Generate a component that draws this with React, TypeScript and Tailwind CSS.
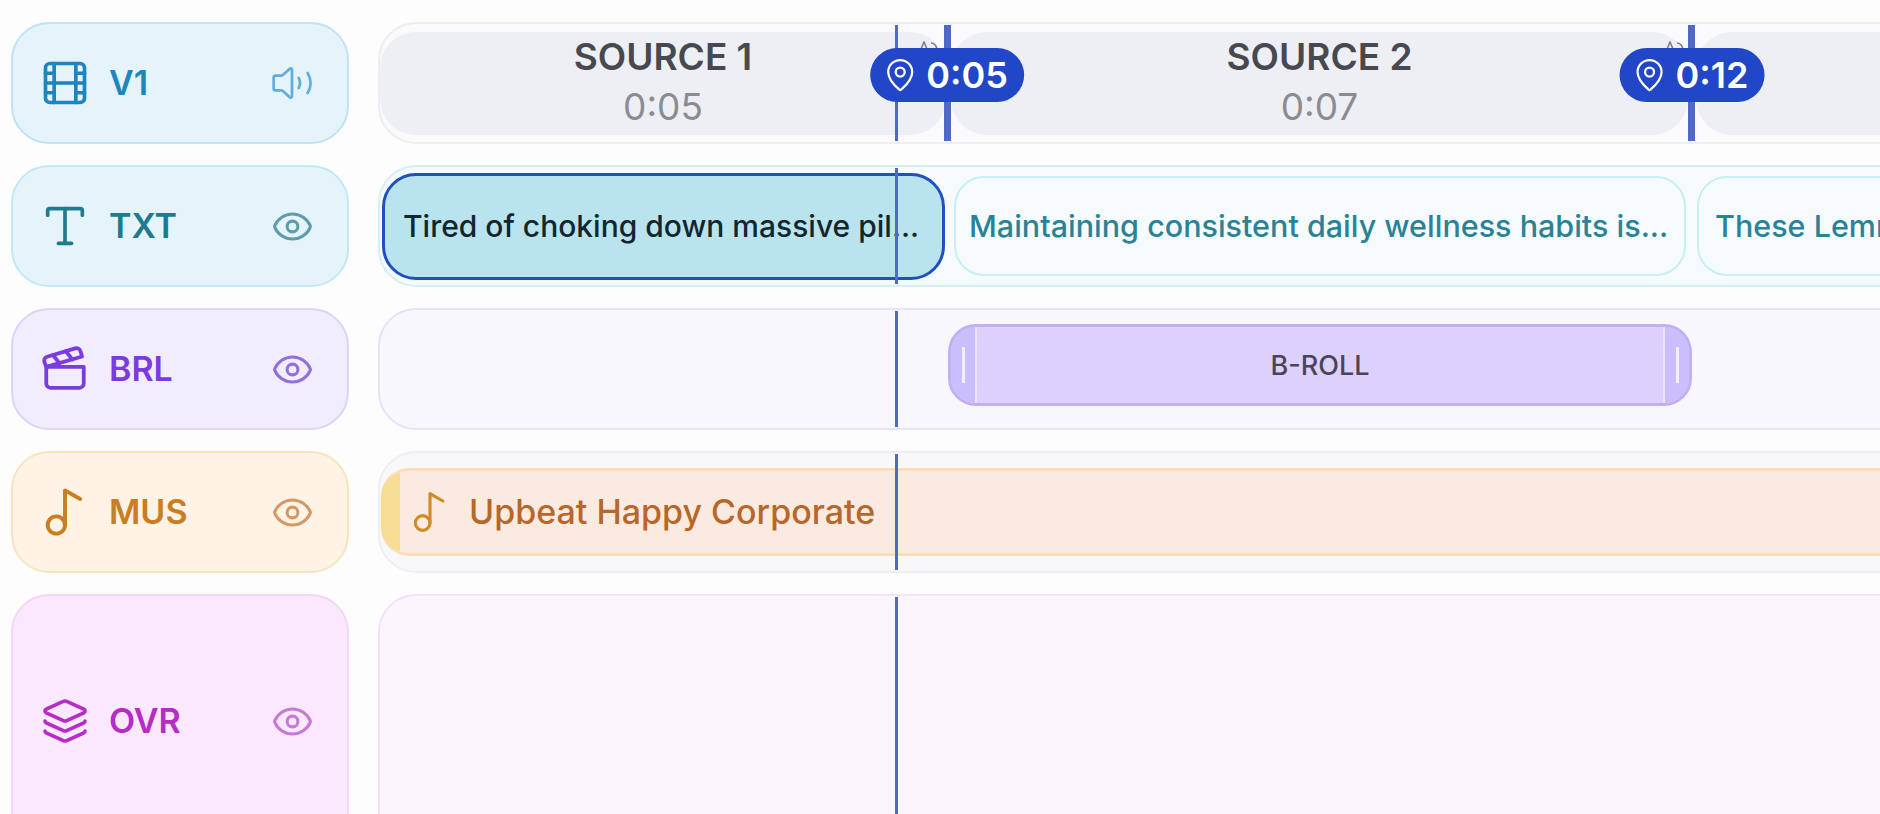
import React from "react";
import { Film, Type, Clapperboard, Music2, Layers, Eye, MapPin } from "lucide-react";

function Playhead() {
  return <div className="absolute inset-y-[1px] left-[515px] w-[3px] bg-[#5068c6] z-10" />;
}

function Speaker() {
  return (
    <svg width="44" height="44" viewBox="0 0 24 24" fill="none" stroke="currentColor" strokeWidth="1.5" strokeLinecap="round" strokeLinejoin="round">
      <path d="M12 4.7a.7.7 0 0 0-1.2-.5L7 7.6A1.4 1.4 0 0 1 6 8H3a1 1 0 0 0-1 1v6a1 1 0 0 0 1 1h3a1.4 1.4 0 0 1 1 .4l3.8 3.4a.7.7 0 0 0 1.2-.5z" />
      <path d="M15.7 9.3a6 6 0 0 1 0 5.4" />
      <path d="M20.5 6.5a10 10 0 0 1 0 11" />
    </svg>
  );
}

function Label({ icon, name, side, className, nameColor, sideColor, tall }: {
  icon: React.ReactNode; name: string; side: React.ReactNode; className: string; nameColor: string; sideColor: string; tall?: boolean;
}) {
  return (
    <div className={`w-[338px] shrink-0 rounded-[38px] border-2 flex items-center pl-[26px] pr-[33px] ${className} ${tall ? "h-[300px] pb-[46px]" : "h-[122px]"}`}>
      <div className={`w-[52px] h-[52px] shrink-0 flex items-center justify-center ${nameColor}`}>{icon}</div>
      <span className={`ml-[18px] text-[34px] font-semibold leading-none ${nameColor}`}>{name}</span>
      <div className={`ml-auto ${sideColor}`}>{side}</div>
    </div>
  );
}

function Pill({ time, pos }: { time: string; pos: string }) {
  return (
    <div className={`absolute top-[24px] h-[54px] -translate-x-1/2 rounded-full bg-[#2146c7] text-white flex items-center pl-[12px] pr-[16px] gap-[8px] z-20 ${pos}`}>
      <MapPin size={36} strokeWidth={1.5} />
      <span className="text-[36px] font-semibold leading-none">{time}</span>
    </div>
  );
}

function Tick({ pos }: { pos: string }) {
  return (
    <svg width="18" height="8" viewBox="0 0 18 8" className={`absolute top-[17px] z-10 text-[#77798a] ${pos}`} fill="none" stroke="currentColor" strokeWidth="1.5">
      <path d="M1 8 L4 1 L7 8" />
      <path d="M11 2 C14 2 16 4 17 8" />
    </svg>
  );
}

function SourceClip({ className, title, time }: { className: string; title?: string; time?: string }) {
  return (
    <div className={`shrink-0 h-[103px] rounded-[36px] bg-[#eeeff5] flex flex-col items-center justify-center pb-[3px] ${className}`}>
      {title && <div className="text-[37px] font-semibold leading-[50px] text-[#47494f]">{title}</div>}
      {time && <div className="text-[37px] font-normal leading-[50px] text-[#8a8c92]">{time}</div>}
    </div>
  );
}

export default function App() {
  return (
    <div className="w-[1880px] h-[814px] overflow-hidden bg-[#fdfdfe] pt-[22px] pl-[11px] flex flex-col gap-[21px] font-['Inter',sans-serif]">
      {/* V1 */}
      <div className="flex gap-[29px] shrink-0">
        <Label
          icon={<Film size={52} strokeWidth={1.7} />}
          name="V1"
          className="bg-[#e5f3fb] border-[#c0e3f6]"
          nameColor="text-[#1f85bf]"
          sideColor="text-[#62aedb]"
          side={<Speaker />}
        />
        <div className="relative w-[1560px] shrink-0 h-[122px] rounded-[38px] border-2 border-[#eeeef2] bg-[#fafafc] flex pt-[8px] gap-[5px]">
          <SourceClip className="w-[566px]" title="SOURCE 1" time="0:05" />
          <SourceClip className="w-[737px]" title="SOURCE 2" time="0:07" />
          <SourceClip className="w-[300px] ml-[3px]" />
          <Playhead />
          <div className="absolute inset-y-[1px] left-[564px] w-[7px] bg-[#5068c6] z-10" />
          <div className="absolute inset-y-[1px] left-[1308px] w-[7px] bg-[#5068c6] z-10" />
          <Tick pos="left-[540px]" />
          <Tick pos="left-[1286px]" />
          <Pill time="0:05" pos="left-[567px]" />
          <Pill time="0:12" pos="left-[1312px]" />
        </div>
      </div>

      {/* TXT */}
      <div className="flex gap-[29px] shrink-0">
        <Label
          icon={<Type size={52} strokeWidth={1.7} />}
          name="TXT"
          className="bg-[#e5f4fa] border-[#c0e9f5]"
          nameColor="text-[#1e7a8e]"
          sideColor="text-[#5e9cab]"
          side={<Eye size={43} strokeWidth={1.7} />}
        />
        <div className="relative w-[1560px] shrink-0 h-[122px] rounded-[38px] border-2 border-[#d3eff7] bg-[#f5fbfd] flex items-center pl-[2px]">
          <div className="w-[563px] shrink-0 h-[107px] rounded-[34px] border-[3px] border-[#1f4fc0] bg-[#b9e4ee] flex items-center pl-[18px] overflow-hidden">
            <span className="text-[30px] font-medium text-[#12262e] whitespace-nowrap">Tired of choking down massive pil...</span>
          </div>
          <div className="ml-[9px] w-[732px] shrink-0 h-[100px] rounded-[30px] border-2 border-[#c8eef5] bg-[#f5fbfd] flex items-center pl-[13px] overflow-hidden">
            <span className="text-[30.5px] font-medium text-[#2a8296] whitespace-nowrap">Maintaining consistent daily wellness habits is...</span>
          </div>
          <div className="ml-[11px] w-[300px] shrink-0 h-[100px] rounded-[30px] border-2 border-[#c8eef5] bg-[#f5fbfd] flex items-center pl-[16px] overflow-hidden">
            <span className="text-[30.5px] font-medium text-[#2a8296] whitespace-nowrap">These Lemme Gummies...</span>
          </div>
          <Playhead />
        </div>
      </div>

      {/* BRL */}
      <div className="flex gap-[29px] shrink-0">
        <Label
          icon={<Clapperboard size={50} strokeWidth={1.8} />}
          name="BRL"
          className="bg-[#f1ecfe] border-[#ddd3fb]"
          nameColor="text-[#7a3be0]"
          sideColor="text-[#9170dc]"
          side={<Eye size={43} strokeWidth={1.7} />}
        />
        <div className="relative w-[1560px] shrink-0 h-[122px] rounded-[38px] border-2 border-[#e6e2fa] bg-[#f8f7fe] flex items-center pl-[568px]">
          <div className="w-[744px] h-[82px] mb-[8px] rounded-[28px] border-[3px] border-[#c2b0f3] bg-[#dcd1fd] flex items-stretch overflow-hidden">
            <div className="w-[26px] shrink-0 bg-[#cabffc] border-r-2 border-[#eae4fe] flex items-center justify-center">
              <div className="w-[3px] h-[36px] bg-[#f2eeff]" />
            </div>
            <div className="flex-1 flex items-center justify-center text-[27px] font-medium text-[#4a4458] pt-[2px]">B-ROLL</div>
            <div className="w-[26px] shrink-0 bg-[#cabffc] border-l-2 border-[#eae4fe] flex items-center justify-center">
              <div className="w-[3px] h-[36px] bg-[#f2eeff]" />
            </div>
          </div>
          <Playhead />
        </div>
      </div>

      {/* MUS */}
      <div className="flex gap-[29px] shrink-0">
        <Label
          icon={<Music2 size={52} strokeWidth={1.8} />}
          name="MUS"
          className="bg-[#fef3e5] border-[#fbe3bf]"
          nameColor="text-[#cb7d22]"
          sideColor="text-[#d19a66]"
          side={<Eye size={43} strokeWidth={1.7} />}
        />
        <div className="relative w-[1560px] shrink-0 h-[122px] rounded-[38px] border-2 border-[#eeeef3] bg-[#f8f8fb] flex items-center pl-[1px]">
          <div className="w-[1540px] shrink-0 h-[88px] rounded-l-[28px] border-y-[3px] border-[#f8dfb8] bg-[#fbeae0] flex items-center overflow-hidden">
            <div className="w-[19px] h-full shrink-0 bg-[#f6dc94]" />
            <Music2 size={44} strokeWidth={1.7} className="ml-[8px] text-[#d08a2a] shrink-0" />
            <span className="ml-[17px] text-[34px] font-medium text-[#b8662a] whitespace-nowrap pb-[2px]">Upbeat Happy Corporate</span>
          </div>
          <Playhead />
        </div>
      </div>

      {/* OVR */}
      <div className="flex gap-[29px] shrink-0">
        <Label
          icon={<Layers size={48} strokeWidth={1.8} />}
          name="OVR"
          tall
          className="bg-[#fae8fe] border-[#f3d5f8]"
          nameColor="text-[#b52cc6]"
          sideColor="text-[#c878d6]"
          side={<Eye size={43} strokeWidth={1.7} />}
        />
        <div className="relative w-[1560px] shrink-0 h-[300px] rounded-[38px] border-2 border-[#f6e0fb] bg-[#fbf6fe]">
          <Playhead />
        </div>
      </div>
    </div>
  );
}
